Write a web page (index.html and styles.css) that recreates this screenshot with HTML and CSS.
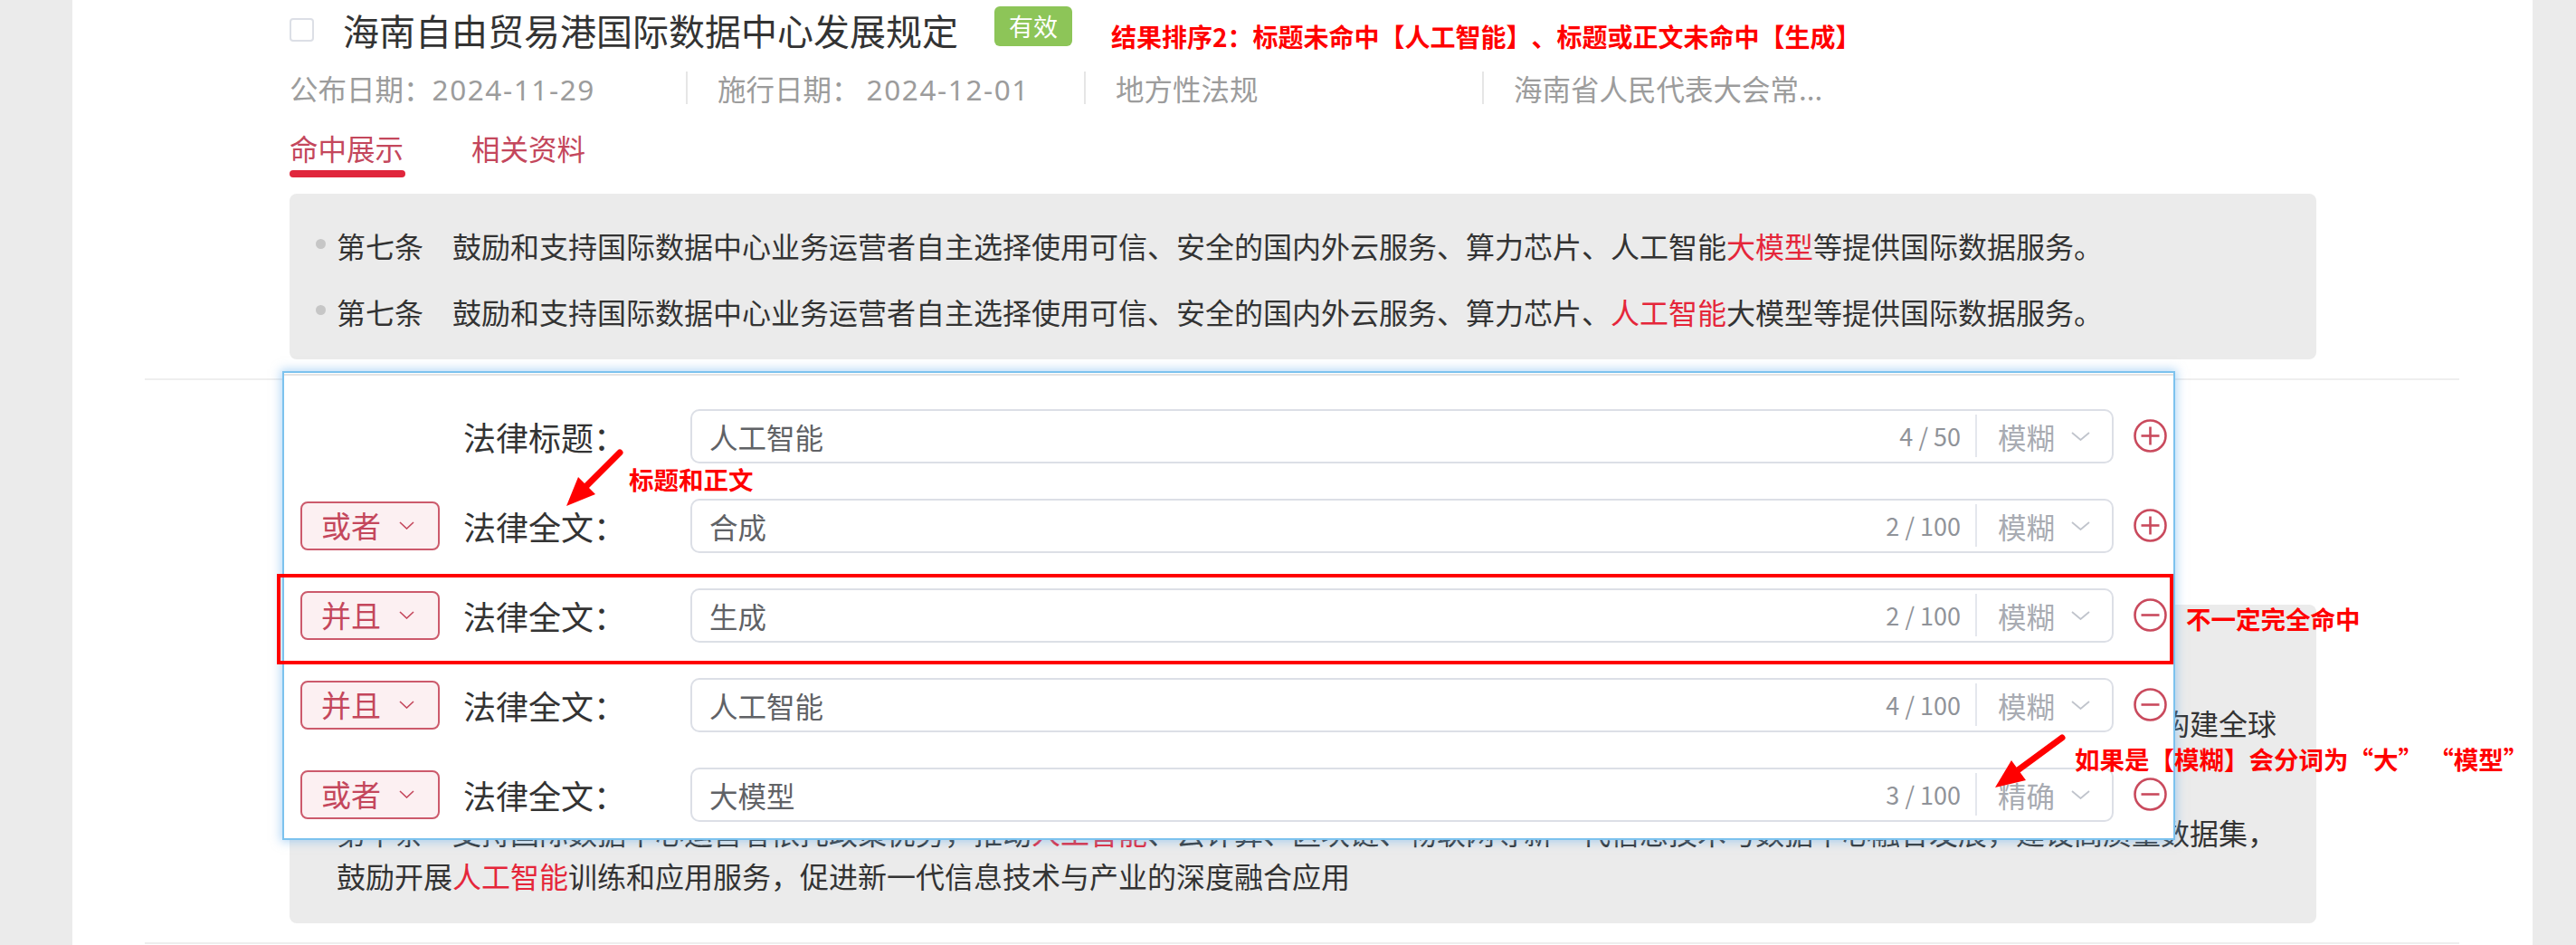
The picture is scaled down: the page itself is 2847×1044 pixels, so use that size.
FILE: index.html
```html
<!DOCTYPE html>
<html lang="zh-CN">
<head>
<meta charset="utf-8">
<title>检索结果</title>
<link rel="stylesheet" href="styles.css">
</head>
<body>
<div class="page">
  <main class="main">
    <ul class="results">
      <li class="result">
        <div class="title-row">
          <span class="checkbox"></span>
          <span class="title">海南自由贸易港国际数据中心发展规定</span>
          <span class="badge">有效</span>
          <span class="note note-rank">结果排序2：标题未命中【人工智能】、标题或正文未命中【生成】</span>
        </div>
        <div class="meta">
          <span class="meta-item">公布日期：<span class="num">2024-11-29</span></span>
          <span class="meta-item">施行日期： <span class="num">2024-12-01</span></span>
          <span class="meta-item">地方性法规</span>
          <span class="meta-item">海南省人民代表大会常...</span>
        </div>
        <div class="tabs">
          <span class="tab is-active">命中展示</span>
          <span class="tab">相关资料</span>
        </div>
        <div class="hits">
          <p class="hit">第七条　鼓励和支持国际数据中心业务运营者自主选择使用可信、安全的国内外云服务、算力芯片、人工智能<em>大模型</em>等提供国际数据服务。</p>
          <p class="hit">第七条　鼓励和支持国际数据中心业务运营者自主选择使用可信、安全的国内外云服务、算力芯片、<em>人工智能</em>大模型等提供国际数据服务。</p>
        </div>
      </li>
      <li class="result">
        <div class="title-row">
          <span class="checkbox"></span>
          <span class="title">海南自由贸易港数字经济促进条例</span>
          <span class="badge">有效</span>
        </div>
        <div class="meta">
          <span class="meta-item">公布日期：<span class="num">2024-09-27</span></span>
          <span class="meta-item">施行日期： <span class="num">2024-11-01</span></span>
          <span class="meta-item">地方性法规</span>
          <span class="meta-item">海南省人民代表大会常...</span>
        </div>
        <div class="tabs">
          <span class="tab is-active">命中展示</span>
          <span class="tab">相关资料</span>
        </div>
        <div class="hits">
          <p class="hit">第九条　鼓励国际数据中心运营者按照国家有关规定开展离岸数据服务，提升数据安全保障能力。</p>
          <p class="hit">第八条　支持国际数据中心依法开展数据跨境流动业务，推动数据要素安全有序流通，加强与国际数据中心运营机构交流合作，提升服务能力，构建全球数据服务网络，打造面向全球的数据中心集聚区。</p>
          <p class="hit">第十条　支持国际数据中心运营者依托政策优势，推动<em>人工智能</em>、云计算、区块链、物联网等新一代信息技术与数据中心融合发展，建设高质量数据集，鼓励开展<em>人工智能</em>训练和应用服务，促进新一代信息技术与产业的深度融合应用</p>
        </div>
      </li>
    </ul>

    <section class="query-panel">
      <div class="q-row">
        <span class="logic logic-empty"></span>
        <span class="q-label">法律标题：</span>
        <div class="q-input">
          <span class="q-value">人工智能</span>
          <span class="q-count">4 / 50</span>
          <span class="q-mode">模糊<svg class="chev" width="21" height="10" viewBox="0 0 21 10"><polyline points="1,1 10.5,9 20,1" fill="none" stroke="#c0c4cc" stroke-width="1.8"/></svg></span>
        </div>
        <svg class="q-op" width="37" height="37" viewBox="0 0 37 37"><circle cx="18.5" cy="18.5" r="17" fill="none" stroke="#c94a5d" stroke-width="2.6"/><line x1="8.5" y1="18.5" x2="28.5" y2="18.5" stroke="#c94a5d" stroke-width="2.6"/><line x1="18.5" y1="8.5" x2="18.5" y2="28.5" stroke="#c94a5d" stroke-width="2.6"/></svg>
      </div>
      <div class="q-row">
        <span class="logic">或者<svg class="chev-s" width="17" height="9" viewBox="0 0 17 9"><polyline points="1,1 8.5,8 16,1" fill="none" stroke="#c4475c" stroke-width="1.6"/></svg></span>
        <span class="q-label">法律全文：</span>
        <div class="q-input">
          <span class="q-value">合成</span>
          <span class="q-count">2 / 100</span>
          <span class="q-mode">模糊<svg class="chev" width="21" height="10" viewBox="0 0 21 10"><polyline points="1,1 10.5,9 20,1" fill="none" stroke="#c0c4cc" stroke-width="1.8"/></svg></span>
        </div>
        <svg class="q-op" width="37" height="37" viewBox="0 0 37 37"><circle cx="18.5" cy="18.5" r="17" fill="none" stroke="#c94a5d" stroke-width="2.6"/><line x1="8.5" y1="18.5" x2="28.5" y2="18.5" stroke="#c94a5d" stroke-width="2.6"/><line x1="18.5" y1="8.5" x2="18.5" y2="28.5" stroke="#c94a5d" stroke-width="2.6"/></svg>
      </div>
      <div class="q-row">
        <span class="logic">并且<svg class="chev-s" width="17" height="9" viewBox="0 0 17 9"><polyline points="1,1 8.5,8 16,1" fill="none" stroke="#c4475c" stroke-width="1.6"/></svg></span>
        <span class="q-label">法律全文：</span>
        <div class="q-input">
          <span class="q-value">生成</span>
          <span class="q-count">2 / 100</span>
          <span class="q-mode">模糊<svg class="chev" width="21" height="10" viewBox="0 0 21 10"><polyline points="1,1 10.5,9 20,1" fill="none" stroke="#c0c4cc" stroke-width="1.8"/></svg></span>
        </div>
        <svg class="q-op" width="37" height="37" viewBox="0 0 37 37"><circle cx="18.5" cy="18.5" r="17" fill="none" stroke="#c94a5d" stroke-width="2.6"/><line x1="8.5" y1="18.5" x2="28.5" y2="18.5" stroke="#c94a5d" stroke-width="2.6"/></svg>
      </div>
      <div class="q-row">
        <span class="logic">并且<svg class="chev-s" width="17" height="9" viewBox="0 0 17 9"><polyline points="1,1 8.5,8 16,1" fill="none" stroke="#c4475c" stroke-width="1.6"/></svg></span>
        <span class="q-label">法律全文：</span>
        <div class="q-input">
          <span class="q-value">人工智能</span>
          <span class="q-count">4 / 100</span>
          <span class="q-mode">模糊<svg class="chev" width="21" height="10" viewBox="0 0 21 10"><polyline points="1,1 10.5,9 20,1" fill="none" stroke="#c0c4cc" stroke-width="1.8"/></svg></span>
        </div>
        <svg class="q-op" width="37" height="37" viewBox="0 0 37 37"><circle cx="18.5" cy="18.5" r="17" fill="none" stroke="#c94a5d" stroke-width="2.6"/><line x1="8.5" y1="18.5" x2="28.5" y2="18.5" stroke="#c94a5d" stroke-width="2.6"/></svg>
      </div>
      <div class="q-row">
        <span class="logic">或者<svg class="chev-s" width="17" height="9" viewBox="0 0 17 9"><polyline points="1,1 8.5,8 16,1" fill="none" stroke="#c4475c" stroke-width="1.6"/></svg></span>
        <span class="q-label">法律全文：</span>
        <div class="q-input">
          <span class="q-value">大模型</span>
          <span class="q-count">3 / 100</span>
          <span class="q-mode">精确<svg class="chev" width="21" height="10" viewBox="0 0 21 10"><polyline points="1,1 10.5,9 20,1" fill="none" stroke="#c0c4cc" stroke-width="1.8"/></svg></span>
        </div>
        <svg class="q-op" width="37" height="37" viewBox="0 0 37 37"><circle cx="18.5" cy="18.5" r="17" fill="none" stroke="#c94a5d" stroke-width="2.6"/><line x1="8.5" y1="18.5" x2="28.5" y2="18.5" stroke="#c94a5d" stroke-width="2.6"/></svg>
      </div>
    </section>
  </main>

  <div class="annotations">
    <svg class="marks" width="2847" height="1044" viewBox="0 0 2847 1044">
      <rect x="308" y="636" width="2092" height="96" fill="none" stroke="#ff0000" stroke-width="4"/>
      <line x1="685" y1="500" x2="648" y2="537" stroke="#ff0000" stroke-width="7" stroke-linecap="round"/>
      <polygon points="626,559 658,546 639,527" fill="#ff0000"/>
      <line x1="2279" y1="815" x2="2230" y2="851" stroke="#ff0000" stroke-width="7" stroke-linecap="round"/>
      <polygon points="2205,870 2239,862 2223,840" fill="#ff0000"/>
    </svg>
    <span class="note note-a">标题和正文</span>
    <span class="note note-b">不一定完全命中</span>
    <span class="note note-c">如果是【模糊】会分词为“大” “模型”</span>
  </div>
</div>
</body>
</html>
```

FILE: styles.css
```css
* { box-sizing: border-box; }

html, body {
  margin: 0;
  padding: 0;
}

body {
  background: #ebebeb;
  font-family: "Noto Sans CJK SC", "Noto Sans", sans-serif;
  color: #333;
  overflow: hidden;
  text-spacing-trim: space-all;
}

.page {
  position: relative;
  width: 2847px;
  height: 1044px;
  padding: 0 48px 0 80px;
}

.main {
  position: relative;
  height: 100%;
  background: #fff;
  overflow: hidden;
}

/* ---------- result list ---------- */
.results {
  list-style: none;
  margin: -34px 81px 0 80px;
  padding: 0;
}

.result {
  padding: 47px 158px 21px 160px;
  border-bottom: 2px solid #eeeeee;
}

.title-row {
  display: flex;
  align-items: center;
  height: 40px;
}

.checkbox {
  flex: none;
  width: 27px;
  height: 26px;
  border: 2px solid #dcdfe6;
  border-radius: 4px;
  background: #fff;
}

.title {
  margin-left: 32px;
  font-size: 40px;
  line-height: 40px;
  color: #333;
  white-space: nowrap;
}

.badge {
  margin-left: 40px;
  margin-bottom: 8px;
  height: 44px;
  padding: 0 16px;
  border-radius: 6px;
  background: #8dc558;
  color: #fff;
  font-size: 27px;
  line-height: 44px;
  white-space: nowrap;
}

.note {
  color: #ff0000;
  font-weight: 700;
  font-size: 27.5px;
  line-height: 1;
  white-space: nowrap;
}

.note-rank {
  margin-left: 43px;
  margin-top: 14px;
  font-size: 28px;
}

.meta {
  display: flex;
  margin-top: 26px;
  height: 36px;
  font-size: 31.5px;
  line-height: 36px;
  color: #9c9c9c;
}

.meta-item {
  width: 440px;
  padding-left: 33px;
  border-left: 2px solid #e6e6e6;
  white-space: nowrap;
}

.meta-item:first-child {
  width: 438px;
  padding-left: 0;
  border-left: 0;
}

.num {
  font-family: "Noto Sans", "Noto Sans CJK SC", sans-serif;
  letter-spacing: 1.6px;
}

.tabs {
  display: flex;
  gap: 75px;
  margin-top: 30px;
}

.tab {
  position: relative;
  padding-bottom: 15px;
  font-size: 31.5px;
  line-height: 36px;
  color: #c4475c;
}

.tab.is-active::after {
  content: "";
  position: absolute;
  left: 0;
  right: -2px;
  bottom: 0;
  height: 8px;
  border-radius: 4px;
  background: #e0263c;
}

.hits {
  margin-top: 18px;
  padding: 33px 28px 29px 52px;
  background: #ebebeb;
  border-radius: 8px;
}

.hit {
  position: relative;
  margin: 0;
  font-size: 32px;
  line-height: 48px;
  color: #333;
}

.hit + .hit {
  margin-top: 25px;
}

.hit::before {
  content: "";
  position: absolute;
  left: -23px;
  top: 17px;
  width: 11px;
  height: 11px;
  border-radius: 50%;
  background: #c6c6c6;
}

.hit em {
  font-style: normal;
  color: #e5263a;
}

/* ---------- query panel (popover) ---------- */
.query-panel {
  position: absolute;
  left: 232px;
  top: 410px;
  z-index: 2;
  width: 2092px;
  height: 518px;
  padding: 20px 0 0;
  background: #fff;
  border: 2px solid #7cc2ee;
  box-shadow: inset 0 1px 0 #fff, inset 0 3px 0 #e3e3e3, 0 0 10px 2px rgba(110, 180, 240, 0.5);
}

.q-row {
  display: flex;
  align-items: center;
  height: 99px;
  padding-left: 18px;
}

.logic {
  flex: none;
  display: flex;
  align-items: center;
  gap: 20px;
  width: 154px;
  height: 54px;
  padding-left: 21px;
  border: 2px solid #cc5a6c;
  border-radius: 8px;
  background: #fcf0f2;
  color: #c4475c;
  font-size: 33px;
  line-height: 1;
}

.logic-empty {
  border-color: transparent;
  background: transparent;
}

.q-label {
  flex: none;
  width: 251px;
  margin-left: 26px;
  font-size: 36px;
  color: #333;
  white-space: nowrap;
}

.q-input {
  flex: none;
  display: flex;
  align-items: center;
  width: 1573px;
  height: 60px;
  padding: 0 24px 0 19px;
  border: 2px solid #dcdfe6;
  border-radius: 10px;
}

.q-value {
  flex: 1;
  font-size: 31.5px;
  color: #606266;
}

.q-count {
  font-size: 27px;
  color: #909399;
  white-space: nowrap;
}

.q-mode {
  display: flex;
  align-items: center;
  gap: 18px;
  height: 47px;
  margin-left: 16px;
  padding-left: 23px;
  border-left: 2px solid #e4e7ed;
  font-size: 31.5px;
  color: #a8abb2;
  white-space: nowrap;
}

.q-op {
  flex: none;
  margin-left: 22px;
}

/* ---------- screenshot annotations ---------- */
.annotations {
  position: absolute;
  inset: 0;
  z-index: 5;
  pointer-events: none;
}

.marks {
  position: absolute;
  left: 0;
  top: 0;
}

.note-a,
.note-b,
.note-c {
  position: absolute;
}

.note-a { left: 695px; top: 516px; }
.note-b { left: 2416px; top: 670px; }
.note-c { left: 2293px; top: 825px; }
```
